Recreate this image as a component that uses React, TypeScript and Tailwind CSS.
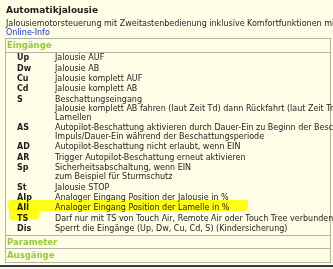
import React from 'react';

interface InputRow {
  key: string;
  lines: string[];
}

const inputs: InputRow[] = [
  { key: 'Up', lines: ['Jalousie AUF'] },
  { key: 'Dw', lines: ['Jalousie AB'] },
  { key: 'Cu', lines: ['Jalousie komplett AUF'] },
  { key: 'Cd', lines: ['Jalousie komplett AB'] },
  {
    key: 'S',
    lines: [
      'Beschattungseingang',
      'Jalousie komplett AB fahren (laut Zeit Td) dann Rückfahrt (laut Zeit Tr) zum Öffnen der',
      'Lamellen'
    ]
  },
  {
    key: 'AS',
    lines: [
      'Autopilot-Beschattung aktivieren durch Dauer-Ein zu Beginn der Beschattungsperiode oder',
      'Impuls/Dauer-Ein während der Beschattungsperiode'
    ]
  },
  { key: 'AD', lines: ['Autopilot-Beschattung nicht erlaubt, wenn EIN'] },
  { key: 'AR', lines: ['Trigger Autopilot-Beschattung erneut aktivieren'] },
  { key: 'Sp', lines: ['Sicherheitsabschaltung, wenn EIN', 'zum Beispiel für Sturmschutz'] },
  { key: 'St', lines: ['Jalousie STOP'] },
  { key: 'AIp', lines: ['Analoger Eingang Position der Jalousie in %'] },
  { key: 'AIl', lines: ['Analoger Eingang Position der Lamelle in %'] },
  { key: 'TS', lines: ['Darf nur mit TS von Touch Air, Remote Air oder Touch Tree verbunden werden'] },
  { key: 'Dis', lines: ['Sperrt die Eingänge (Up, Dw, Cu, Cd, S) (Kindersicherung)'] }
];

const Section: React.FC<{ title: string; children?: React.ReactNode }> = ({ title, children }) => (
  <div className="border-b border-[#b4b4a0]">
    <div className="h-[12.5px] pl-[1px] text-[8.5px] leading-[12.5px] font-bold text-[#97ca3a]">{title}</div>
    {children}
  </div>
);

export default function App() {
  return (
    <div className="relative w-[333px] h-[269px] overflow-hidden bg-[#fefee6] text-[#1e1e1e] font-['DejaVu_Sans',Verdana,sans-serif]">
      <div className="pl-[6px] pt-[4px] whitespace-nowrap">
        <div className="text-[9px] leading-[12px] font-bold">Automatikjalousie</div>
        <div className="mt-[3px] text-[8px] leading-[9px]">
          Jalousiemotorsteuerung mit Zweitastenbedienung inklusive Komfortfunktionen mit Autopilot
        </div>
        <div className="text-[8px] leading-[9px] text-[#1f35c8]">Online-Info</div>
      </div>

      <div className="mt-[1px] ml-[5px] w-[326px] border-l border-r border-t border-[#b4b4a0] whitespace-nowrap">
        <Section title="Eingänge">
          <div className="border-t border-[#b4b4a0] pb-[1px]">
            {inputs.map(row => (
              <div key={row.key} className="flex py-[0.7px] text-[8px] leading-[9px]">
                <div className="w-[49px] shrink-0 pl-[11px] font-bold">{row.key}</div>
                <div>
                  {row.lines.map((line, i) => (
                    <div key={i}>{line}</div>
                  ))}
                </div>
              </div>
            ))}
          </div>
        </Section>
        <Section title="Parameter" />
        <Section title="Ausgänge" />
      </div>

      {/* highlighter stroke over AIl */}
      <div className="absolute left-[8px] top-[200px] w-[240px] h-[11px] rounded-[3px] bg-[#ffff1a] mix-blend-multiply blur-[0.6px]" />
      <div className="absolute left-[9px] top-[208px] w-[30px] h-[12px] rounded-[4px] bg-[#ffff1a] mix-blend-multiply blur-[0.6px] -rotate-3" />

      <div className="absolute left-0 right-0 top-[265px] h-[2px] bg-[#3a3a3a]" />
      <div className="absolute left-0 right-0 top-[267px] h-[2px] bg-[#f4f4f4]" />
    </div>
  );
}
